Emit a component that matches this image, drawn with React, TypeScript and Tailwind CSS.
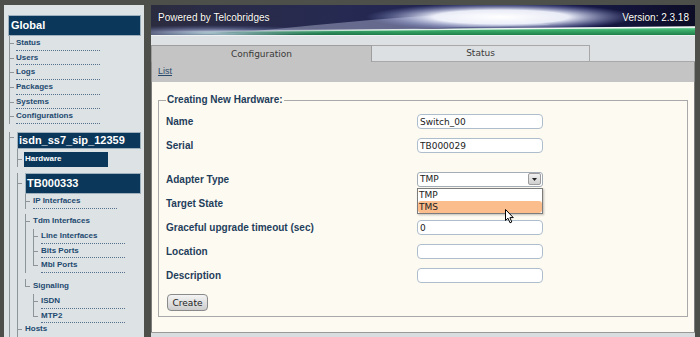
import React from "react";

function Conn({ w, d, last }: { w: string; d: string; last?: boolean }) {
  return (
    <div className={`flex flex-col shrink-0 ${w}`}>
      <div className={`${d} w-[5px] shrink-0 border-l border-b border-[#8d949a]`} />
      {!last && <div className="flex-1 border-l border-[#8d949a]" />}
    </div>
  );
}

function Item({ label, w, d, last, tw, under = true }: { label: string; w: string; d: string; last?: boolean; tw: string; under?: boolean }) {
  return (
    <div className="flex">
      <Conn w={w} d={d} last={last} />
      <div
        className={`${tw} h-[14.7px] text-[8px] font-bold leading-[13.7px] text-[#1d4a70] whitespace-nowrap ${
          under ? "border-b border-dotted border-[#56718d]" : ""
        }`}
      >
        {label}
      </div>
    </div>
  );
}

function Sidebar() {
  return (
    <div className="w-[140px] shrink-0 h-[332px] bg-[#dde2e5] pt-[10px] font-['Liberation_Sans',Arial,sans-serif] overflow-hidden">
      <div className="ml-[4px] w-[133px] h-[21px] bg-[#0b375a] border border-[#9fb0bd] text-white text-[11px] font-bold leading-[19px] pl-[2px]">
        Global
      </div>
      <div className="ml-[5px] flex flex-col">
        {["Status", "Users", "Logs", "Packages", "Systems", "Configurations"].map((l) => (
          <Item key={l} label={l} w="w-[7px]" d="h-[8px]" tw="w-[84px]" />
        ))}
        <div className="flex mt-[7.5px]">
          <Conn w="w-[8px]" d="h-[6px]" />
          <div className="flex flex-col">
            <div className="w-[124px] h-[17.3px] bg-[#0b375a] border border-[#9fb0bd] text-white text-[11px] font-bold leading-[15px] pl-[1px] whitespace-nowrap">
              isdn_ss7_sip_12359
            </div>
            <div className="flex flex-col">
              <div className="flex">
                <Conn w="w-[7px]" d="h-[11px]" />
                <div className="mt-[3px] w-[84px] h-[14.7px] bg-[#0b375a] text-white text-[8px] font-bold leading-[14px] pl-[1px]">
                  Hardware
                </div>
              </div>
              <div className="flex mt-[6.6px]">
                <Conn w="w-[8px]" d="h-[11px]" />
                <div className="flex flex-col">
                  <div className="w-[116px] h-[21px] bg-[#0b375a] border border-[#9fb0bd] text-white text-[11px] font-bold leading-[19px] pl-[1px]">
                    TB000333
                  </div>
                  <div className="flex flex-col">
                    <Item label="IP Interfaces" w="w-[8px]" d="h-[8px]" tw="w-[84px]" />
                    <div className="flex mt-[5.3px]">
                      <Conn w="w-[8px]" d="h-[8px]" />
                      <div className="flex flex-col">
                        <div className="h-[14.7px] text-[8px] font-bold leading-[13.7px] text-[#1d4a70]">Tdm Interfaces</div>
                        <Item label="Line Interfaces" w="w-[8px]" d="h-[8px]" tw="w-[84px]" />
                        <Item label="Bits Ports" w="w-[8px]" d="h-[8px]" tw="w-[84px]" />
                        <Item label="Mbl Ports" w="w-[8px]" d="h-[8px]" tw="w-[84px]" last />
                      </div>
                    </div>
                    <div className="flex mt-[6.2px]">
                      <Conn w="w-[8px]" d="h-[8px]" last />
                      <div className="flex flex-col">
                        <div className="h-[14.7px] text-[8px] font-bold leading-[13.7px] text-[#1d4a70]">Signaling</div>
                        <Item label="ISDN" w="w-[8px]" d="h-[8px]" tw="w-[84px]" />
                        <Item label="MTP2" w="w-[8px]" d="h-[8px]" tw="w-[84px]" last />
                      </div>
                    </div>
                  </div>
                </div>
              </div>
              <div className="mt-[-1.4px]">
                <Item label="Hosts" w="w-[8px]" d="h-[8px]" tw="w-[84px]" under={false} />
              </div>
              <div className="h-[40px] border-l border-[#8d949a]" />
            </div>
          </div>
        </div>
        <div className="h-[40px]" />
      </div>
    </div>
  );
}

function Banner() {
  return (
    <div className="relative h-[30px] w-[544px] shrink-0 overflow-hidden">
      <svg className="absolute inset-0" width="544" height="30" viewBox="0 0 544 30" preserveAspectRatio="none">
        <defs>
          <linearGradient id="bgg" x1="0" x2="1" y1="0" y2="0">
            <stop offset="0" stopColor="#2c2c40" />
            <stop offset="0.35" stopColor="#262a52" />
            <stop offset="0.75" stopColor="#1a1c4e" />
            <stop offset="1" stopColor="#0d0d26" />
          </linearGradient>
          <radialGradient id="glow" cx="0.5" cy="0.5" r="0.5">
            <stop offset="0" stopColor="#ffffff" stopOpacity="1" />
            <stop offset="0.5" stopColor="#f4f6ff" stopOpacity="0.95" />
            <stop offset="1" stopColor="#7f8fd0" stopOpacity="0" />
          </radialGradient>
          <radialGradient id="haze" cx="0.5" cy="0.5" r="0.5">
            <stop offset="0" stopColor="#d4def6" stopOpacity="0.95" />
            <stop offset="1" stopColor="#6070b0" stopOpacity="0" />
          </radialGradient>
          <linearGradient id="grn" x1="0" y1="0" x2="0" y2="1">
            <stop offset="0" stopColor="#9be6bd" />
            <stop offset="0.35" stopColor="#3fb26f" />
            <stop offset="1" stopColor="#1f7f49" />
          </linearGradient>
          <linearGradient id="gfade" x1="0" x2="1" y1="0" y2="0">
            <stop offset="0" stopColor="#ffffff" stopOpacity="0" />
            <stop offset="0.12" stopColor="#ffffff" stopOpacity="0.2" />
            <stop offset="0.3" stopColor="#ffffff" stopOpacity="0.85" />
            <stop offset="0.45" stopColor="#ffffff" stopOpacity="1" />
            <stop offset="1" stopColor="#ffffff" stopOpacity="1" />
          </linearGradient>
          <mask id="gm">
            <rect width="544" height="30" fill="url(#gfade)" />
          </mask>
          <linearGradient id="wl" x1="0" x2="1" y1="0" y2="0">
            <stop offset="0" stopColor="#ffffff" stopOpacity="0" />
            <stop offset="0.4" stopColor="#ffffff" stopOpacity="0.8" />
            <stop offset="1" stopColor="#ffffff" stopOpacity="1" />
          </linearGradient>
        </defs>
        <rect width="544" height="30" fill="url(#bgg)" />
        <ellipse cx="60" cy="28" rx="120" ry="8" fill="url(#haze)" />
        <path d="M60 30 C 150 22, 250 10, 340 8 L 400 20 C 300 22, 200 26, 120 30 Z" fill="#dfe6ff" opacity="0.35" />
        <ellipse cx="350" cy="12" rx="135" ry="14" fill="url(#glow)" />
        <path d="M0 30 L0 27 C 150 26, 330 23, 544 22 L544 30 Z" fill="url(#grn)" mask="url(#gm)" />
        <path d="M0 27 C 150 26, 330 23, 544 22" stroke="url(#wl)" strokeWidth="1.5" fill="none" />
      </svg>
      <div className="relative flex justify-between pt-[7px] px-[7px] pr-[6px] text-[10px] leading-[12px] text-white font-['Liberation_Sans',Arial,sans-serif] [text-shadow:0_0_1px_#000]">
        <span>Powered by Telcobridges</span>
        <span>Version: 2.3.18</span>
      </div>
    </div>
  );
}

const LABEL = "w-[251px] shrink-0 text-[10px] font-bold text-[#1f3e5c] font-['Liberation_Sans',Arial,sans-serif]";

function Field({ label, value, h }: { label: string; value?: string; h: string }) {
  return (
    <div className={`flex items-center ${h}`}>
      <div className={LABEL}>{label}</div>
      <input
        readOnly
        value={value ?? ""}
        className="w-[126px] h-[15px] rounded-[4px] border border-[#aebdcc] bg-white pl-[2px] p-0 text-[9px] leading-[13px] text-[#222] font-['DejaVu_Sans',sans-serif] outline-none"
      />
    </div>
  );
}

function Cursor() {
  return (
    <svg width="10" height="15" viewBox="0 0 10 15" className="absolute left-[88px] top-[37px]">
      <path d="M0.5 0.5 L0.5 11.5 L3 9.2 L5 13.8 L6.8 13 L4.9 8.6 L8.3 8.6 Z" fill="#fff" stroke="#000" strokeWidth="1" strokeLinejoin="round" />
    </svg>
  );
}

function FormArea() {
  return (
    <div className="h-[250px] shrink-0 bg-[#fdfaf1] border-x border-[#7d7d7d] px-[6px] pt-[12px]">
      <fieldset className="border border-[#a9a9a9] pl-[7px] pb-[4px]">
        <legend className="px-[1px] text-[10px] leading-[12px] font-bold text-[#1f3e5c] font-['Liberation_Sans',Arial,sans-serif]">
          Creating New Hardware:
        </legend>
        <div className="pt-[3.5px]">
          <Field label="Name" value="Switch_00" h="h-[24px]" />
          <Field label="Serial" value="TB000029" h="h-[24px]" />
          <div className="h-[9px]" />
          <div className="flex items-center h-[25px]">
            <div className={LABEL}>Adapter Type</div>
            <div className="relative">
              <div className="w-[126px] h-[15px] rounded-[3px] border border-[#a3acb6] bg-white flex items-center">
                <span className="flex-1 pl-[2px] text-[9px] leading-[13px] text-[#222] font-['DejaVu_Sans',sans-serif]">TMP</span>
                <div className="w-[13px] h-[12px] mr-[1px] rounded-[2px] border border-[#9c9c9c] bg-gradient-to-b from-[#f0f0f0] to-[#cfcfcf] flex items-center justify-center">
                  <svg width="5" height="3" viewBox="0 0 5 3">
                    <path d="M0 0 L5 0 L2.5 3 Z" fill="#222" />
                  </svg>
                </div>
              </div>
              <div className="absolute left-0 top-[16px] w-[126px] h-[26px] bg-white border border-[#7c7c7c] shadow-[1px_1px_2px_rgba(0,0,0,0.25)] text-[9px] leading-[12px] text-[#222] font-['DejaVu_Sans',sans-serif] z-10">
                <div className="h-[12px] pl-[1px]">TMP</div>
                <div className="h-[12px] pl-[1px] bg-[#fbbd8c] rounded-[3px]">TMS</div>
              </div>
              <div className="absolute inset-0 z-20">
                <Cursor />
              </div>
            </div>
          </div>
          <div className="flex items-center h-[24px]">
            <div className={LABEL}>Target State</div>
          </div>
          <Field label="Graceful upgrade timeout (sec)" value="0" h="h-[24px]" />
          <Field label="Location" h="h-[24px]" />
          <Field label="Description" h="h-[24px]" />
          <button className="mt-[3.5px] ml-[1px] h-[17px] w-[41px] rounded-[4px] border border-[#8a8a8a] bg-gradient-to-b from-[#f4f4f4] to-[#cdcdcd] text-[9px] leading-[14px] text-[#222] font-['DejaVu_Sans',sans-serif]">
            Create
          </button>
        </div>
      </fieldset>
    </div>
  );
}

export default function App() {
  return (
    <div className="w-[700px] h-[337px] bg-[#4d4f4b] overflow-hidden flex items-start pt-[5px] pl-[4px]">
      <Sidebar />
      <div className="ml-[7px] w-[544px] h-[332px] shrink-0 flex flex-col">
        <Banner />
        <div className="h-[10px] shrink-0 bg-[#dde1e3] border-t border-[#eef0f2]" />
        <div className="h-[17px] shrink-0 flex bg-[#dde1e3]">
          <div className="w-[221px] h-[17px] bg-[#c4c4c4] border-t border-x border-[#9e9e9e] text-center text-[9px] leading-[16px] text-[#3a3a3a] font-['DejaVu_Sans',sans-serif]">
            Configuration
          </div>
          <div className="w-[218px] h-[17px] bg-[#dde0e2] border border-l-0 border-[#a8a8a8] text-center text-[9px] leading-[15px] text-[#3a3a3a] font-['DejaVu_Sans',sans-serif]">
            Status
          </div>
          <div className="flex-1 border-b border-[#a8a8a8]" />
        </div>
        <div className="h-[20px] shrink-0 flex items-center bg-[#c4c4c4] border-x border-[#8e8e8e] pl-[6px] pb-[2px] text-[9px] leading-[12px] text-[#2a4a6a] underline font-['Liberation_Sans',Arial,sans-serif]">
          List
        </div>
        <FormArea />
        <div className="h-[5px] shrink-0 bg-[#d9dddf] border-t border-[#9a9a9a]" />
      </div>
    </div>
  );
}
